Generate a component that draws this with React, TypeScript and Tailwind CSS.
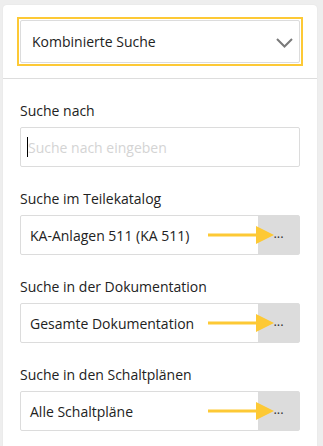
import React from 'react';

const fields = [
  { label: 'Suche im Teilekatalog', value: 'KA-Anlagen 511 (KA 511)' },
  { label: 'Suche in der Dokumentation', value: 'Gesamte Dokumentation' },
  { label: 'Suche in den Schaltplänen', value: 'Alle Schaltpläne' },
];

function Arrow() {
  return (
    <svg
      className="absolute left-[187px] top-1/2 -translate-y-1/2 pointer-events-none"
      width="67"
      height="20"
      viewBox="0 0 67 20"
    >
      <line x1="0" y1="10" x2="50" y2="10" stroke="#fdc935" strokeWidth="3" />
      <polygon points="48,1 66,10 48,19" fill="#fdc935" />
    </svg>
  );
}

function PickerField({ label, value }: { label: string; value: string }) {
  return (
    <div className="flex flex-col">
      <label className="text-[14px] leading-[20px] text-[#222] mb-[6px]">{label}</label>
      <div className="relative flex h-[40px] border border-[#dcdcdc] rounded-[2px] bg-white">
        <div className="flex-1 flex items-center pl-[9px] text-[14px] text-[#222]">{value}</div>
        <button className="w-[41px] bg-[#dcdcdc] flex items-center justify-center text-[13px] text-[#333] pb-[2px]">
          ...
        </button>
        <Arrow />
      </div>
    </div>
  );
}

export default function App() {
  return (
    <div
      className="min-h-screen bg-[#eeeeee] pt-[5px] pl-[3px]"
      style={{ fontFamily: '"Open Sans", "Noto Sans", sans-serif' }}
    >
      <div className="w-[314px] min-h-[441px] bg-white rounded-t-[4px] shadow-[0_0_2px_rgba(0,0,0,0.06)]">
        {/* Search mode */}
        <div className="px-[14px] py-[12px] border-b border-[#dddddd]">
          <div className="border-2 border-[#fdc935] p-[1px]">
            <div className="h-[43px] border border-[#dcdcdc] rounded-[2px] flex items-center justify-between pl-[11px] pr-[6px]">
              <span className="text-[14px] text-[#222]">Kombinierte Suche</span>
              <svg width="17" height="10" viewBox="0 0 17 10" className="mt-[2px]">
                <polyline points="1,1 8.5,8.5 16,1" fill="none" stroke="#7a7a7a" strokeWidth="2" />
              </svg>
            </div>
          </div>
        </div>

        <div className="px-[17px] pt-[22px] flex flex-col gap-[22px]">
          <div className="flex flex-col">
            <label className="text-[14px] leading-[20px] text-[#222] mb-[6px]">Suche nach</label>
            <div className="h-[40px] border border-[#dcdcdc] rounded-[2px] flex items-center pl-[6px]">
              <span className="w-[1px] h-[20px] bg-black" />
              <input
                className="flex-1 outline-none text-[14px] text-[#222] placeholder:text-[#d4d4d4] bg-transparent"
                placeholder="Suche nach eingeben"
              />
            </div>
          </div>
          {fields.map((f) => (
            <PickerField key={f.label} label={f.label} value={f.value} />
          ))}
        </div>
      </div>
    </div>
  );
}
